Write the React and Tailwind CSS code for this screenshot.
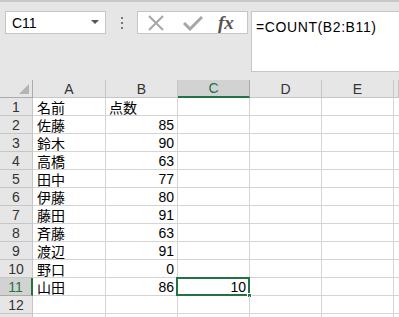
import React from "react";

const rows = [
  ["名前", "点数"],
  ["佐藤", "85"],
  ["鈴木", "90"],
  ["高橋", "63"],
  ["田中", "77"],
  ["伊藤", "80"],
  ["藤田", "91"],
  ["斉藤", "63"],
  ["渡辺", "91"],
  ["野口", "0"],
  ["山田", "86"],
  ["", ""],
  ["", ""],
];

const cols = ["A", "B", "C", "D", "E", ""];
const jp = { fontFamily: '"Noto Sans CJK JP", "Liberation Sans", sans-serif' };
const sans = { fontFamily: '"Liberation Sans", Arial, sans-serif' };

export default function App() {
  return (
    <div className="w-[399px] h-[317px] overflow-hidden bg-white" style={sans}>
      {/* formula bar area */}
      <div className="h-[80px] bg-[#e6e6e6] border-t-2 border-[#c8c8c8] flex items-start pt-[9px]">
        <div className="ml-[5px] w-[101px] h-[23px] bg-white border border-[#c6c6c6] flex items-center justify-between pl-[6px] pr-[6px]">
          <span className="text-[14px] text-black leading-none">C11</span>
          <svg width="8" height="5" viewBox="0 0 8 5"><path d="M0 0h8L4 4z" fill="#555" /></svg>
        </div>
        <div className="w-[31px] h-[23px] flex flex-col items-center justify-center gap-[3px]">
          <span className="w-[2px] h-[2px] bg-[#777]" />
          <span className="w-[2px] h-[2px] bg-[#777]" />
          <span className="w-[2px] h-[2px] bg-[#777]" />
        </div>
        <div className="w-[111px] h-[23px] bg-white border border-[#c6c6c6] flex items-center pl-[9px]">
          <svg width="18" height="16" viewBox="0 0 18 16">
            <path d="M2 1L16 15M16 1L2 15" stroke="#a6a6a6" strokeWidth="2" fill="none" />
          </svg>
          <svg className="ml-[18px]" width="20" height="16" viewBox="0 0 20 16">
            <path d="M1 8l6 6L19 2" stroke="#a6a6a6" strokeWidth="3" fill="none" />
          </svg>
          <span className="ml-[15px] text-[19px] italic font-bold text-[#555] leading-none" style={{ fontFamily: '"Liberation Serif", serif' }}>fx</span>
        </div>
        <div className="ml-[3px] flex-1 h-[61px] bg-white border border-[#c6c6c6] border-r-0 pl-[4px] pt-[3px]">
          <span className="text-[14px] text-black tracking-[0.6px]">=COUNT(B2:B11)</span>
        </div>
      </div>

      {/* grid */}
      <div className="grid grid-cols-[33px_73px_72px_72px_72px_72px_1fr]">
        {cols.map((c, i) => (
          <React.Fragment key={"h" + i}>
            {i === 0 && (
              <div className="h-[18px] bg-[#e6e6e6] border-r border-b border-[#ababab] relative">
                <svg className="absolute right-[3px] bottom-[3px]" width="10" height="10" viewBox="0 0 10 10">
                  <path d="M10 0V10H0z" fill="#b4b4b4" />
                </svg>
              </div>
            )}
            <div
              className={
                c === "C"
                  ? "h-[18px] bg-[#d2d2d2] border-r border-[#ababab] border-b-2 border-b-[#217346] flex items-center justify-center text-[14px] leading-none text-[#217346]"
                  : "h-[18px] bg-[#e6e6e6] border-r border-b border-[#c6c6c6] flex items-center justify-center text-[14px] leading-none text-[#333]"
              }
            >
              {c}
            </div>
          </React.Fragment>
        ))}
        {rows.map((r, ri) => (
          <React.Fragment key={ri}>
            <div
              className={
                ri === 10
                  ? "h-[18px] bg-[#d2d2d2] border-b border-[#ababab] border-r-2 border-r-[#217346] flex items-center justify-center text-[14px] leading-none text-[#217346]"
                  : "h-[18px] bg-[#e6e6e6] border-r border-b border-[#c6c6c6] flex items-center justify-center text-[14px] leading-none text-[#333]"
              }
            >
              {ri < 12 ? ri + 1 : ""}
            </div>
            <div className="h-[18px] border-r border-b border-[#d4d4d4] flex items-center pl-[4px] text-[14px] leading-none text-black" style={jp}>
              {r[0]}
            </div>
            <div className={"h-[18px] border-r border-b border-[#d4d4d4] flex items-center px-[3px] text-[14px] leading-none text-black " + (ri === 0 ? "justify-start" : "justify-end")} style={ri === 0 ? jp : sans}>
              {r[1]}
            </div>
            <div className="h-[18px] border-r border-b border-[#d4d4d4] flex items-center justify-end px-[3px] text-[14px] leading-none text-black relative">
              {ri === 10 && (
                <>
                  <span>10</span>
                  <span className="absolute -left-[2px] -top-[1px] -right-[1px] -bottom-[1px] border-2 border-[#217346]" />
                  <span className="absolute -right-[3px] -bottom-[3px] w-[5px] h-[5px] bg-[#217346] border border-white" />
                </>
              )}
            </div>
            <div className="h-[18px] border-r border-b border-[#d4d4d4]" />
            <div className="h-[18px] border-r border-b border-[#d4d4d4]" />
            <div className="h-[18px] border-b border-[#d4d4d4]" />
          </React.Fragment>
        ))}
      </div>
    </div>
  );
}
